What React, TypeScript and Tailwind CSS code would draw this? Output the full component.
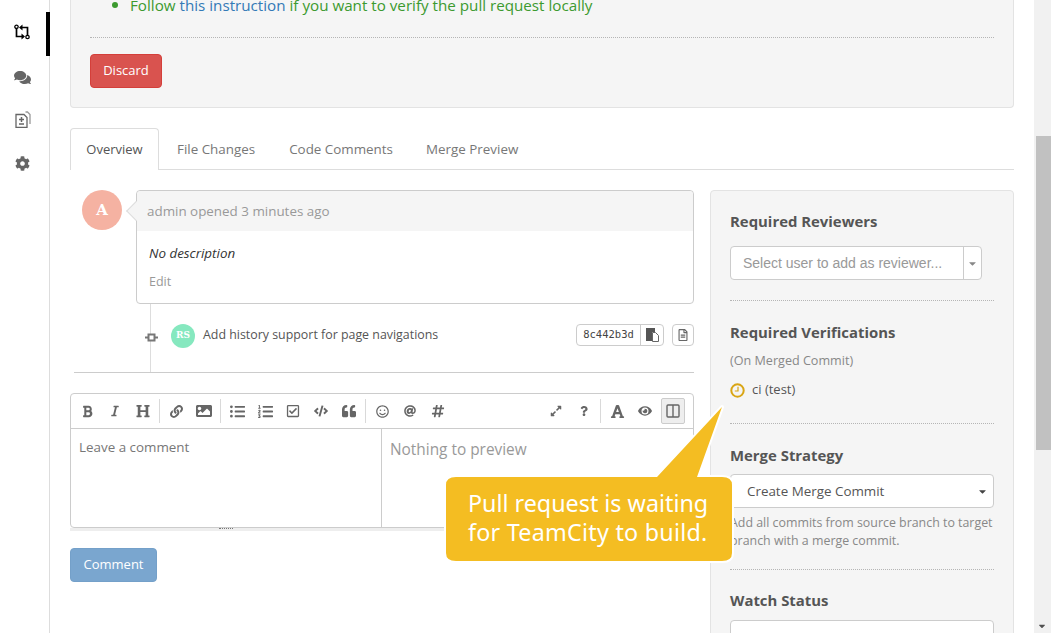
import React from "react";
import {
  FaComments, FaCog, FaBold, FaItalic, FaHeading, FaLink, FaImage, FaListUl, FaListOl, FaRegCheckSquare,
  FaCode, FaQuoteLeft, FaRegSmile, FaAt, FaHashtag, FaExpandAlt, FaQuestion, FaFont, FaEye, FaRegFileAlt, FaCaretDown,
} from "react-icons/fa";

const PrIcon = () => (
  <svg width="16" height="16" viewBox="0 0 16 16" fill="none" stroke="#000" strokeWidth="1.7">
    <path d="M2.500 4.500V12.500H8M13.500 11.500V3.500H8" />
    <path d="M8.500 0.500 5 3.500l3.500 3zM7.500 9.500l3.500 3-3.500 3z" fill="#000" stroke="none" />
    <circle cx="2.500" cy="2.800" r="1.700" fill="#fff" strokeWidth="1.300" />
    <circle cx="13.500" cy="13" r="1.700" fill="#fff" strokeWidth="1.300" />
  </svg>
);

const PlusMinusFile = () => (
  <svg width="16" height="17" viewBox="0 0 16 17" fill="none" stroke="#666" strokeWidth="1.300">
    <path d="M1 3.500h8l3 3v10H1z" />
    <path d="M10.500 1h2l2.500 2.500V13" stroke="#999" />
    <path d="M6.500 6v5M4 8.500h5M4 13h5" strokeWidth="1.500" />
  </svg>
);

const PasteIcon = () => (
  <svg width="13" height="14" viewBox="0 0 13 14">
    <path d="M0 0h9v4H6v9H0z" fill="#555" />
    <path d="M6.500 4.500h3l3 3v6h-6z" fill="#fff" stroke="#666" />
  </svg>
);

const Sep = () => <span className="w-px h-6 bg-[#d9d9d9] mx-[2px]" />;

const Tool = ({ children }: { children: React.ReactNode }) => (
  <span className="w-[28px] h-[26px] flex items-center justify-center text-[#666]">{children}</span>
);

const Divider = () => <div className="border-t border-dotted border-[#b5b5b5]" />;

export default function App() {
  return (
    <div className="relative w-[1051px] h-[633px] overflow-hidden bg-white flex text-[13.400px] text-[#555] font-['Open_Sans','Noto_Sans',sans-serif]">
      <nav className="w-[50px] shrink-0 border-r border-[#ddd] flex flex-col pt-[12px]">
        <div className="h-[44px] border-r-4 border-black -mr-px flex items-start pt-[12px] pl-[14px]"><PrIcon /></div>
        <div className="h-[44px] flex items-start pt-[13px] pl-[14px] text-[#666]"><FaComments size={17} /></div>
        <div className="h-[44px] flex items-start pt-[11px] pl-[15px]"><PlusMinusFile /></div>
        <div className="h-[44px] flex items-start pt-[12px] pl-[15px] text-[#666]"><FaCog size={15} /></div>
      </nav>

      <main className="w-[984px] shrink-0 px-[20px] overflow-hidden">
        <section className="flow-root w-[944px] h-[108px] bg-[#f5f5f5] border border-t-0 border-[#e3e3e3] rounded-b-[4px] px-[19px]">
          <div className="h-[42px] -mt-[5px] flex items-start gap-[12px] pl-[22px] text-[15.200px] leading-[20px] whitespace-nowrap">
            <span className="w-[6px] h-[6px] rounded-full bg-[#3c9a2f] mt-[7px]" />
            <span className="text-[#3c9a2f]">Follow <span className="text-[#337ab7]">this instruction</span> if you want to verify the pull request locally</span>
          </div>
          <Divider />
          <button className="mt-[16px] w-[72px] h-[34px] bg-[#d9534f] border border-[#d43f3a] rounded-[4px] text-white text-[13px]">Discard</button>
        </section>

        <div className="mt-[20px] h-[42px] flex border-b border-[#ddd] w-[944px]">
          <div className="w-[89px] h-[42px] bg-white border border-b-0 border-[#ddd] rounded-t-[4px] flex items-center justify-center text-[13px] pt-px text-[#555]">Overview</div>
          <div className="ml-[3px] px-[15px] flex items-center pt-px text-[#777]">File Changes</div>
          <div className="ml-[4px] px-[15px] flex items-center pt-px text-[#777]">Code Comments</div>
          <div className="ml-[3px] px-[15px] flex items-center pt-px text-[#777]">Merge Preview</div>
        </div>

        <div className="mt-[20px] flex gap-[16px]">
          <div className="w-[624px] shrink-0">
            <div className="flex pl-[12px] gap-[14px]">
              <div className="w-[40px] h-[40px] rounded-full bg-[#f5b2a2] text-white flex items-center justify-center font-['DejaVu_Serif',serif] font-bold text-[15px]">A</div>
              <div className="relative w-[558px] h-[114px] border border-[#ccc] rounded-[4px]">
                <span className="absolute -left-[8px] top-[13px] w-[14px] h-[14px] rotate-45 bg-[#f5f5f5] border-l border-b border-[#ddd]" />
                <div className="relative h-[40px] bg-[#f5f5f5] rounded-t-[4px] flex items-center px-[10px] text-[#999]">admin opened 3 minutes ago</div>
                <div className="px-[12px] pt-[13px] italic text-[#333] leading-[18px]">No description</div>
                <div className="px-[12px] pt-[11px] text-[12.500px] leading-[18px] text-[#999]">Edit</div>
              </div>
            </div>

            <div className="relative h-[68px] ml-[80px] border-l border-[#ddd] w-[544px] flex items-start pt-[20px]">
              <span className="absolute -left-[6px] top-[27px] w-[13px] h-[13px] flex items-center justify-center">
                <svg width="13" height="9" viewBox="0 0 13 9"><path d="M0 4.500h3M10 4.500h3" stroke="#777" strokeWidth="2" /><rect x="3.500" y="1.500" width="6" height="6" fill="#fff" stroke="#777" strokeWidth="2" /></svg>
              </span>
              <div className="ml-[20px] w-[24px] h-[24px] rounded-full bg-[#86e8bf] text-white flex items-center justify-center font-['DejaVu_Serif',serif] font-bold text-[9px]">RS</div>
              <span className="ml-[8px] mt-[2px] text-[12.400px] leading-[18px] text-[#555] whitespace-nowrap">Add history support for page navigations</span>
              <div className="ml-auto flex gap-[8px]">
                <div className="h-[22px] w-[88px] border border-[#ccc] rounded-[4px] flex text-[#444]">
                  <span className="w-[64px] border-r border-[#ccc] flex items-center justify-center font-['DejaVu_Sans_Mono',monospace] text-[10.500px]">8c442b3d</span>
                  <span className="flex-1 flex items-center justify-center"><PasteIcon /></span>
                </div>
                <div className="h-[22px] w-[22px] border border-[#ccc] rounded-[4px] flex items-center justify-center text-[#666]"><FaRegFileAlt size={12} /></div>
              </div>
            </div>

            <div className="ml-[4px] border-t border-[#ccc]" />

            <div className="mt-[20px] w-[624px] h-[135px] border border-[#ccc] rounded-[4px] flex flex-col">
              <div className="h-[35px] border-b border-[#ccc] flex items-center pl-[2px] pr-[8px]">
                <Tool><FaBold size={13} /></Tool>
                <Tool><FaItalic size={12} /></Tool>
                <Tool><FaHeading size={14} /></Tool>
                <Sep />
                <Tool><FaLink size={13} /></Tool>
                <Tool><FaImage size={16} /></Tool>
                <Sep />
                <Tool><FaListUl size={15} /></Tool>
                <Tool><FaListOl size={15} /></Tool>
                <Tool><FaRegCheckSquare size={14} /></Tool>
                <Tool><FaCode size={14} /></Tool>
                <Tool><FaQuoteLeft size={14} /></Tool>
                <Sep />
                <Tool><FaRegSmile size={13} /></Tool>
                <Tool><FaAt size={12} /></Tool>
                <Tool><FaHashtag size={14} /></Tool>
                <span className="ml-auto flex items-center">
                  <Tool><FaExpandAlt size={12} /></Tool>
                  <Tool><FaQuestion size={10} /></Tool>
                  <Sep />
                  <Tool><FaFont size={15} /></Tool>
                  <Tool><FaEye size={14} /></Tool>
                  <span className="ml-[2px] w-[24px] h-[26px] flex items-center justify-center bg-[#eee] border border-[#ccc] rounded-[2px] text-[#666]">
                    <svg width="14" height="14" viewBox="0 0 14 14" fill="none" stroke="#666" strokeWidth="1.400"><rect x="1" y="1" width="12" height="12" rx="1" /><path d="M7 1v12" /></svg>
                  </span>
                </span>
              </div>
              <div className="flex-1 flex">
                <div className="w-[311px] border-r border-[#ccc] px-[8px] pt-[9px] text-[#777] leading-[18px]">Leave a comment</div>
                <div className="flex-1 px-[8px] pt-[10px] text-[15.400px] leading-[22px] text-[#999]">Nothing to preview</div>
              </div>
            </div>
            <div className="relative h-[3px] bg-[#eee]">
              <span className="absolute left-[149px] top-0 w-[14px] border-t border-dotted border-[#777]" />
            </div>
            <button className="mt-[17px] w-[87px] h-[34px] bg-[#7aa6cf] border border-[#74a0c9] rounded-[4px] text-white text-[13px]">Comment</button>
          </div>

          <aside className="w-[304px] shrink-0 h-[500px] bg-[#f5f5f5] border border-[#e3e3e3] rounded-[4px] px-[19px] pt-[20px]">
            <h4 className="font-bold text-[14.900px] leading-[20px] text-[#555]">Required Reviewers</h4>
            <div className="mt-[15px] w-[252px] h-[34px] bg-white border border-[#ccc] rounded-[4px] flex text-[#999]">
              <span className="flex-1 border-r border-[#ccc] px-[12px] flex items-center font-['Liberation_Sans',sans-serif] text-[14px] whitespace-nowrap">Select user to add as reviewer...</span>
              <span className="w-[17px] flex items-center justify-center text-[#888]"><FaCaretDown size={11} /></span>
            </div>
            <div className="mt-[20px]"><Divider /></div>
            <h4 className="mt-[21px] font-bold text-[14.900px] leading-[20px] text-[#555]">Required Verifications</h4>
            <p className="mt-[10px] text-[12.600px] leading-[18px] text-[#888]">(On Merged Commit)</p>
            <div className="mt-[11px] flex items-center h-[18px]">
              <svg width="15" height="15" viewBox="0 0 15 15" fill="none" stroke="#d9a514"><circle cx="7.500" cy="7.500" r="6.200" strokeWidth="2" /><path d="M8 3.800V8H4.800" strokeWidth="1.200" /></svg>
              <span className="ml-[7px] text-[13px] text-[#555]">ci (test)</span>
            </div>
            <div className="mt-[24px]"><Divider /></div>
            <h4 className="mt-[21px] font-bold text-[14.900px] leading-[20px] text-[#555]">Merge Strategy</h4>
            <div className="mt-[9px] h-[34px] bg-white border border-[#ccc] rounded-[4px] flex items-center justify-between pl-[16px] pr-[5px] text-[#555]">
              <span>Create Merge Commit</span>
              <FaCaretDown size={11} className="text-[#444]" />
            </div>
            <p className="mt-[6px] text-[12.400px] leading-[18px] text-[#888]">Add all commits from source branch to target branch with a merge commit.</p>
            <div className="mt-[19px]"><Divider /></div>
            <h4 className="mt-[20px] font-bold text-[14.900px] leading-[20px] text-[#555]">Watch Status</h4>
            <div className="mt-[10px] h-[34px] bg-white border border-[#ccc] rounded-[4px]" />
          </aside>
        </div>
      </main>

      <div className="w-[17px] shrink-0 bg-[#f1f1f1] relative">
        <div className="absolute left-[2px] w-[15px] top-[136px] h-[314px] bg-[#c1c1c1]" />
        <FaCaretDown size={10} className="absolute left-[3px] top-[621px] text-[#505050]" />
      </div>

      <svg className="absolute left-[440px] top-[400px]" width="300" height="168" viewBox="440 400 300 168">
        <path
          d="M722 407 L697 477 H722 Q732 477 732 485 V553 Q732 561 722 561 H456 Q446 561 446 553 V485 Q446 477 456 477 H657 Z"
          fill="#f4bd22"
          stroke="#fff"
          strokeWidth="4"
          strokeLinejoin="round"
          paintOrder="stroke"
        />
      </svg>
      <div className="absolute left-[468px] top-[489px] font-['Noto_Sans',sans-serif] text-white text-[23.300px] leading-[29px] whitespace-nowrap">
        Pull request is waiting
        <br />
        <span className="tracking-[0.25px]">for TeamCity to build.</span>
      </div>
    </div>
  );
}
